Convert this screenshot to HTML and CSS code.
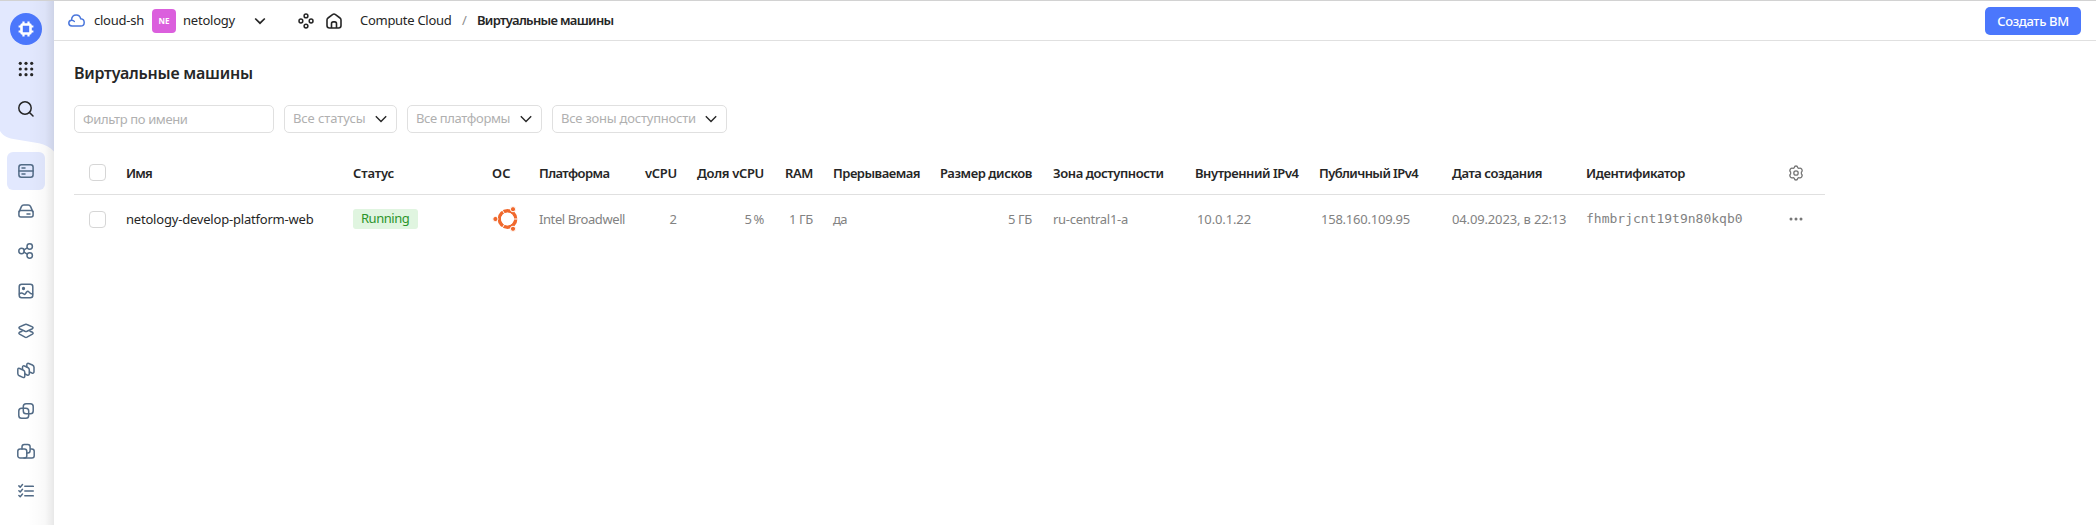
FILE: index.html
```html
<!DOCTYPE html>
<html lang="ru">
<head>
<meta charset="utf-8">
<title>Виртуальные машины</title>
<link rel="stylesheet" href="styles.css">
</head>
<body>
<div class="app">
  <aside class="sidebar">
    <svg class="sidebar-bg" width="54" height="152" viewBox="0 0 54 152"><path d="M0 0H54V150.500C50 146 45 143.500 39 142.200L12 137.700C6 136.500 2 133.500 0 130Z" fill="#e2e8fe"/></svg>
    <nav class="nav">
      <a class="nav-item"><svg width="32" height="32" viewBox="0 0 32 32"><circle cx="16" cy="16" r="16" fill="#4b77fc"/><rect x="11.500" y="11.500" width="9" height="9" rx="1" fill="none" stroke="#fff" stroke-width="2.600"/><path d="M13.500 8.600V11M18.500 8.600V11M13.500 21V23.400M18.500 21V23.400M8.600 13.500H11M8.600 18.500H11M21 13.500H23.400M21 18.500H23.400" stroke="#fff" stroke-width="2.200"/></svg></a>
      <a class="nav-item dark"><svg width="16" height="16" viewBox="0 0 16 16" fill="#262626"><circle cx="2.300" cy="2.300" r="1.600"/><circle cx="8" cy="2.300" r="1.600"/><circle cx="13.700" cy="2.300" r="1.600"/><circle cx="2.300" cy="8" r="1.600"/><circle cx="8" cy="8" r="1.600"/><circle cx="13.700" cy="8" r="1.600"/><circle cx="2.300" cy="13.700" r="1.600"/><circle cx="8" cy="13.700" r="1.600"/><circle cx="13.700" cy="13.700" r="1.600"/></svg></a>
      <a class="nav-item dark"><svg class="line" width="16" height="16" viewBox="0 0 16 16"><circle cx="7" cy="7" r="6.200"/><path d="M11.500 11.500L15 15"/></svg></a>
      <a class="nav-item active"><svg class="line" width="16" height="16" viewBox="0 0 16 16"><rect x=".9" y="1.700" width="14.200" height="12.600" rx="2.500"/><path d="M1 8H15M4 4.900H7M4 11.100H7"/></svg></a>
      <a class="nav-item"><svg class="line" width="16" height="16" viewBox="0 0 16 16"><rect x=".9" y="7.500" width="14.200" height="6.500" rx="2"/><path d="M1.200 8.600L3.400 3.600Q4.100 2 5.800 2H10.200Q11.900 2 12.600 3.600L14.800 8.600M9 10.900H12"/></svg></a>
      <a class="nav-item"><svg class="line" width="16" height="16" viewBox="0 0 16 16"><circle cx="3.500" cy="8" r="2.700"/><circle cx="11.700" cy="3.500" r="2.700"/><circle cx="11.700" cy="12.500" r="2.700"/><path d="M6 6.900L9.300 4.900M6 9.100L9.300 11.100"/></svg></a>
      <a class="nav-item"><svg class="line" width="16" height="16" viewBox="0 0 16 16"><rect x="1.200" y="1.200" width="13.600" height="13.600" rx="2.500"/><circle cx="5.500" cy="5.500" r=".9" fill="#526b86"/><path d="M1.400 11Q3 9.600 4.300 10.200L6 11.200Q7 11.700 7.600 10.500L8.600 9Q9.800 7.600 11 9L12.300 10.300Q13 11 14.600 11"/></svg></a>
      <a class="nav-item"><svg class="line" width="16" height="16" viewBox="0 0 16 16"><path d="M7 1.500Q8 1 9 1.500L14.400 3.900Q15.700 4.800 14.400 5.700L9 8.200Q8 8.600 7 8.200L1.600 5.700Q.3 4.800 1.600 3.900Z"/><path d="M1.500 9.300Q.2 10.300 1.600 11.200L7 14.200Q8 14.700 9 14.200L14.400 11.200Q15.800 10.300 14.500 9.300M1.500 9.300L4 8.200M14.500 9.300L12 8.200"/></svg></a>
      <a class="nav-item"><svg class="line" width="18" height="18" viewBox="0 0 18 18"><path d="M2.700 6.500L6.500 8.200Q7.800 9 7.800 10.500V14Q7.800 16.200 5.800 15.400L2.300 13.800Q.8 13 .8 11.500V7.800Q.8 5.800 2.700 6.500Z"/><path d="M5.500 7.300V5.500Q5.500 3.200 7.500 4L10.800 5.500Q12.300 6.200 12.300 7.700V11.500Q12.300 13.700 10.200 13L8 12"/><path d="M9.800 4.700V3Q9.800 .8 11.800 1.500L15.400 3Q17 3.800 17 5.300V9.500Q17 11.700 15 11L12.500 10"/></svg></a>
      <a class="nav-item"><svg class="line" width="16" height="16" viewBox="0 0 16 16"><rect x="5.300" y=".8" width="9.900" height="9.900" rx="2.800"/><rect x=".8" y="5.300" width="9.900" height="9.900" rx="2.800"/></svg></a>
      <a class="nav-item"><svg class="line" width="18" height="16" viewBox="0 0 18 16"><rect x=".8" y="6" width="9" height="9" rx="2.300"/><path d="M5 6V3.800Q5 1.500 7.300 1.500H10.800Q13.100 1.500 13.100 3.800V7.500Q13.100 10 10.800 10H9.800M13 6H14.900Q17.200 6 17.200 8.300V12.700Q17.200 15 14.900 15H7"/></svg></a>
      <a class="nav-item"><svg class="line" width="16" height="16" viewBox="0 0 16 16"><path d="M6.800 3.300H15.300M6.800 8H15.300M6.800 12.800H15.300M.9 2.900L2.200 4.200L4.500 1.500M.9 7.700L2.200 9L4.500 6.300M.9 12.500L2.200 13.800L4.500 11.100"/></svg></a>
    </nav>
  </aside>
  <main class="main">
    <header class="topbar">
      <svg class="cloud" width="17" height="13" viewBox="0 0 17 13"><path d="M3.900 12Q.8 12 .8 9.100Q.8 6.500 3.500 6.200Q3.800 1 8.300 1Q11.800 1 12.700 4.700Q16.200 5 16.200 8.400Q16.200 12 12.500 12ZM3.500 6.200Q5.300 6.100 6.300 7.400" fill="none" stroke="#4b77dc" stroke-width="1.500" stroke-linecap="round"/></svg>
      <span class="org">cloud-sh</span>
      <span class="avatar">NE</span>
      <span class="folder">netology</span>
      <svg class="chev" width="12" height="8" viewBox="0 0 12 8"><path d="M1.200 1.500L6 6.200L10.800 1.500" fill="none" stroke="#262626" stroke-width="1.700"/></svg>
      <svg class="services" width="16" height="16" viewBox="0 0 16 16" fill="none" stroke="#262626" stroke-width="1.500"><circle cx="8" cy="2.900" r="1.900"/><circle cx="2.900" cy="8" r="1.900"/><circle cx="13.100" cy="8" r="1.900"/><circle cx="8" cy="13.100" r="1.900"/></svg>
      <svg class="home" width="16" height="16" viewBox="0 0 16 16" fill="none" stroke="#262626" stroke-width="1.600"><path d="M1 7Q1 5.700 2 5L6.500 1.600Q8 .5 9.500 1.600L14 5Q15 5.700 15 7V12.500Q15 15 12.500 15H3.500Q1 15 1 12.500Z"/><path d="M5.500 15V10.700Q5.500 8.900 7.200 8.900H8.800Q10.500 8.900 10.500 10.700V15"/></svg>
      <span class="service">Compute Cloud</span>
      <span class="slash">/</span>
      <span class="crumb">Виртуальные машины</span>
      <button class="create">Создать ВМ</button>
    </header>
    <h1 class="title">Виртуальные машины</h1>
    <div class="filters">
      <div class="field name"><span class="ph-name">Фильтр по имени</span></div>
      <div class="field statuses"><span class="ph-status">Все статусы</span><svg class="arrow" width="12" height="8" viewBox="0 0 12 8"><path d="M.8 1.300L6 6.400L11.200 1.300"/></svg></div>
      <div class="field platforms"><span class="ph-platform">Все платформы</span><svg class="arrow" width="12" height="8" viewBox="0 0 12 8"><path d="M.8 1.300L6 6.400L11.200 1.300"/></svg></div>
      <div class="field zones"><span class="ph-zone">Все зоны доступности</span><svg class="arrow" width="12" height="8" viewBox="0 0 12 8"><path d="M.8 1.300L6 6.400L11.200 1.300"/></svg></div>
    </div>
    <div class="table">
      <div class="row head">
        <div class="check"><i class="box"></i></div>
        <div class="h-name">Имя</div>
        <div class="h-status">Статус</div>
        <div class="h-os">ОС</div>
        <div class="h-platform">Платформа</div>
        <div class="num h-cpu">vCPU</div>
        <div class="num h-share">Доля vCPU</div>
        <div class="num h-ram">RAM</div>
        <div class="h-preempt">Прерываемая</div>
        <div class="num h-disk">Размер дисков</div>
        <div class="h-zone">Зона доступности</div>
        <div class="h-int">Внутренний IPv4</div>
        <div class="h-pub">Публичный IPv4</div>
        <div class="h-date">Дата создания</div>
        <div class="h-id">Идентификатор</div>
        <div class="action"><svg width="16" height="16" viewBox="0 0 16 16" fill="none" stroke="#777" stroke-width="1.300" stroke-linejoin="round"><path d="M6.300 2.700Q6.500 1 8 1Q9.500 1 9.700 2.700L10.800 3.400Q12.600 2.700 13.500 3.900Q14.900 6 13.400 7V9Q14.900 10 13.500 12.100Q12.600 13.300 10.800 12.600L9.700 13.300Q9.500 15 8 15Q6.500 15 6.300 13.300L5.200 12.600Q3.400 13.300 2.500 12.100Q1.100 10 2.600 9V7Q1.100 6 2.500 3.900Q3.400 2.700 5.200 3.400Z"/><circle cx="8" cy="8" r="2.200"/></svg></div>
      </div>
      <div class="row body">
        <div class="check"><i class="box"></i></div>
        <div class="c-name">netology-develop-platform-web</div>
        <div><span class="badge">Running</span></div>
        <div class="os"><svg width="26" height="26" viewBox="0 0 26 26"><circle cx="15.500" cy="13" r="8.200" fill="none" stroke="#f0682c" stroke-width="3.400"/><g stroke="#fff" stroke-width="1"><path d="M15.500 13H28M15.500 13L9.200 2.100M15.500 13L9.200 23.900"/></g><circle cx="15.500" cy="13" r="6.300" fill="#fff"/><g fill="#f0682c" stroke="#fff" stroke-width="1"><circle cx="3.400" cy="13" r="2.600"/><circle cx="21" cy="3.200" r="2.600"/><circle cx="21" cy="22.800" r="2.600"/></g></svg></div>
        <div class="c-platform">Intel Broadwell</div>
        <div class="num">2</div>
        <div class="num c-share">5 %</div>
        <div class="num c-size">1 ГБ</div>
        <div class="c-preempt">да</div>
        <div class="num c-size">5 ГБ</div>
        <div class="c-zone">ru-central1-a</div>
        <div class="c-int">10.0.1.22</div>
        <div class="c-pub">158.160.109.95</div>
        <div class="c-date">04.09.2023, в 22:13</div>
        <div class="c-id">fhmbrjcnt19t9n80kqb0</div>
        <div class="action"><svg width="14" height="4" viewBox="0 0 14 4" fill="#777"><circle cx="2" cy="2" r="1.500"/><circle cx="7" cy="2" r="1.500"/><circle cx="12" cy="2" r="1.500"/></svg></div>
      </div>
    </div>
  </main>
</div>
</body>
</html>
```
FILE: styles.css
```css
* { box-sizing: border-box; }
body { margin: 0; background: #fff; color: #262626; font: 13px/18px "Noto Sans", sans-serif; white-space: nowrap; }
svg { display: block; flex: none; }
.app { display: flex; height: 525px; border-top: 1px solid #d2d2d2; overflow: hidden; }

.sidebar { display: grid; flex: none; width: 54px; height: 524px; background: #fff; position: relative; }
.sidebar-bg, .nav { grid-area: 1 / 1; }
.sidebar::after { content: ""; position: absolute; inset: 0 0 0 auto; width: 26px; background: linear-gradient(90deg, rgba(0,0,0,0), rgba(0,0,0,.025) 65%, rgba(0,0,0,.09)); }
.nav { display: flex; flex-direction: column; align-items: center; width: 52px; padding-top: 8px; }
.nav-item { display: flex; align-items: center; justify-content: center; width: 38px; height: 40px; color: #526b86; }
.nav-item:nth-child(3) { margin-bottom: 22px; }
.active { height: 38px; margin: 1px 0; border-radius: 6px; background: #e2e8fe; }
.dark { color: #262626; }
.line { fill: none; stroke: currentColor; stroke-width: 1.5; stroke-linecap: round; stroke-linejoin: round; }

.main { flex: 1; }
.topbar { display: flex; align-items: center; height: 40px; padding: 0 15px 0 14px; border-bottom: 1px solid #e0e0e0; }
.topbar > span { padding-bottom: 1px; }
.cloud { margin-right: 9px; }
.org { width: 58px; letter-spacing: -.24px; }
.avatar { width: 24px; height: 24px; margin-right: 7px; border-radius: 4px; background: #db5fdd; color: #fff; font-size: 8px; font-weight: 700; line-height: 24px; text-align: center; }
.folder { width: 71px; letter-spacing: -.22px; }
.chev { margin-right: 32px; }
.services { margin-right: 12px; }
.home { margin-right: 18px; }
.service { width: 102px; letter-spacing: -.28px; }
.slash { width: 15px; color: #8c8c8c; }
.crumb { font-weight: 600; letter-spacing: -.68px; }
.create { width: 96px; height: 28px; margin-left: auto; padding: 0; border: 0; border-radius: 5px; background: #4b77fc; color: #fff; font: 500 13px/26px "Noto Sans", sans-serif; letter-spacing: -.35px; }

.title { margin: 20px 20px 0; font-size: 16px; font-weight: 600; line-height: 24px; letter-spacing: -.24px; }
.filters { display: flex; gap: 10px; margin: 20px 20px 0; }
.field { display: flex; align-items: center; justify-content: space-between; height: 28px; padding: 0 9px 2px 8px; border: 1px solid #e0e0e0; border-radius: 5px; color: #b0b0b0; }
.name { width: 200px; padding-bottom: 0; }
.statuses { width: 113px; }
.platforms { width: 135px; }
.zones { width: 175px; }
.arrow { margin-top: 2px; fill: none; stroke: #262626; stroke-width: 1.4; }
.ph-name { letter-spacing: -.38px; }
.ph-status { letter-spacing: -.08px; }
.ph-platform { letter-spacing: -.37px; }
.ph-zone { letter-spacing: -.22px; }

.table { width: 1751px; margin: 19px 0 0 20px; }
.row { display: grid; grid-template-columns: 52px 227px 139px 47px 88px 70px 87px 49px 107px 113px 142px 124px 133px 134px 193.5px 1fr; align-items: center; }
.row > .check { padding-left: 15px; }
.head { height: 43px; border-bottom: 1px solid #e0e0e0; font-weight: 600; }
.body { height: 48px; color: #828282; }
.box { display: block; width: 17px; height: 17px; border: 1px solid #d6d6d6; border-radius: 4px; }
.head .box { margin-top: -1px; }
.num { text-align: right; }
.num:nth-child(6) { width: 50px; }
.num:nth-child(7) { width: 67px; }
.num:nth-child(8) { width: 29px; }
.num:nth-child(10) { width: 92px; }
.h-name { letter-spacing: -.8px; }
.h-status { letter-spacing: -.15px; }
.h-os { letter-spacing: .3px; }
.h-platform { letter-spacing: -.58px; }
.h-cpu { letter-spacing: -.28px; }
.h-share { letter-spacing: -.33px; }
.h-ram { letter-spacing: -.4px; }
.h-preempt { letter-spacing: -.5px; }
.h-disk { letter-spacing: -.42px; }
.h-zone { letter-spacing: -.41px; }
.h-int { letter-spacing: -.45px; }
.h-pub { letter-spacing: -.61px; }
.h-date { letter-spacing: -.45px; }
.h-id { letter-spacing: -.43px; }
.c-name { color: #262626; letter-spacing: -.2px; }
.badge { display: block; width: 65px; height: 20px; padding-left: 8px; border-radius: 3px; background: #e0f5e0; color: #2b942b; line-height: 19px; letter-spacing: -.48px; }
.c-platform { letter-spacing: -.41px; }
.c-share { letter-spacing: -.2px; word-spacing: -1.5px; }
.c-size { letter-spacing: -.36px; }
.c-preempt { letter-spacing: -.56px; }
.c-zone { letter-spacing: -.27px; }
.c-int { padding-left: 2px; letter-spacing: -.12px; }
.c-pub { padding-left: 2px; letter-spacing: -.23px; }
.c-date { letter-spacing: -.15px; }
.c-id { font-family: "DejaVu Sans Mono", monospace; font-size: 13px; }
.action { display: flex; justify-content: center; width: 33px; }
```
